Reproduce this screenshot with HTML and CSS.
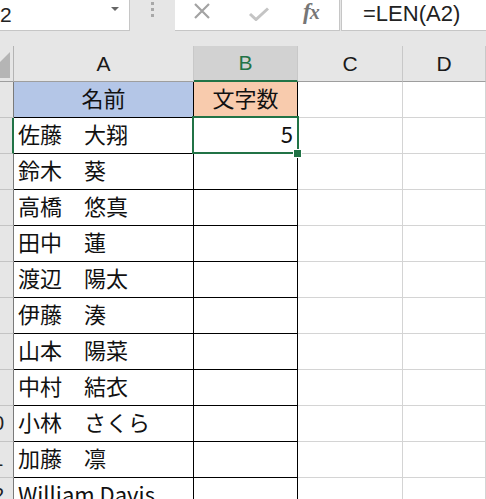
FILE: index.html
```html
<!DOCTYPE html>
<html lang="ja">
<head>
<meta charset="utf-8">
<link rel="stylesheet" href="styles.css">
</head>
<body>
<div class="topbar">
  <div class="namebox"><span class="nb-text">B2</span><span class="nb-arrow"></span></div>
  <div class="grip"><i></i><i></i><i></i></div>
  <div class="tools">
    <svg class="ic-x" width="18" height="16" viewBox="0 0 18 16"><path d="M2 1 L16 15 M16 1 L2 15" stroke="#a3a3a3" stroke-width="2.2" fill="none"/></svg>
    <svg class="ic-check" width="22" height="14" viewBox="0 0 22 14"><path d="M2 7 L8 12.5 L20 1.5" stroke="#c4c4c4" stroke-width="3" fill="none"/></svg>
    <span class="fx">f<span class="fx-x">x</span></span>
  </div>
  <div class="sep"></div>
  <div class="formula">=LEN(A2)</div>
</div>
<div class="band"></div>
<div class="sheet">
  <div class="corner"><svg width="13" height="35" viewBox="0 0 13 35"><polygon points="0,16 10,6 10,32 0,32" fill="#b5b5b5"/></svg></div>
  <div class="ch">A</div>
  <div class="ch ch-sel">B</div>
  <div class="ch">C</div>
  <div class="ch">D</div>

  <div class="rh"><span>1</span></div>
  <div class="c d a1">名前</div>
  <div class="c d b1">文字数</div>
  <div class="c"></div><div class="c"></div>

  <div class="rh rh-sel"><span>2</span></div>
  <div class="c d">佐藤　大翔</div>
  <div class="c d num sel">5<span class="handle"></span></div>
  <div class="c"></div><div class="c"></div>

  <div class="rh"><span>3</span></div>
  <div class="c d">鈴木　葵</div>
  <div class="c d"></div>
  <div class="c"></div><div class="c"></div>

  <div class="rh"><span>4</span></div>
  <div class="c d">高橋　悠真</div>
  <div class="c d"></div>
  <div class="c"></div><div class="c"></div>

  <div class="rh"><span>5</span></div>
  <div class="c d">田中　蓮</div>
  <div class="c d"></div>
  <div class="c"></div><div class="c"></div>

  <div class="rh"><span>6</span></div>
  <div class="c d">渡辺　陽太</div>
  <div class="c d"></div>
  <div class="c"></div><div class="c"></div>

  <div class="rh"><span>7</span></div>
  <div class="c d">伊藤　湊</div>
  <div class="c d"></div>
  <div class="c"></div><div class="c"></div>

  <div class="rh"><span>8</span></div>
  <div class="c d">山本　陽菜</div>
  <div class="c d"></div>
  <div class="c"></div><div class="c"></div>

  <div class="rh"><span>9</span></div>
  <div class="c d">中村　結衣</div>
  <div class="c d"></div>
  <div class="c"></div><div class="c"></div>

  <div class="rh"><span>10</span></div>
  <div class="c d">小林　さくら</div>
  <div class="c d"></div>
  <div class="c"></div><div class="c"></div>

  <div class="rh"><span>11</span></div>
  <div class="c d">加藤　凛</div>
  <div class="c d"></div>
  <div class="c"></div><div class="c"></div>

  <div class="rh"><span>12</span></div>
  <div class="c d">William Davis</div>
  <div class="c d"></div>
  <div class="c"></div><div class="c"></div>
</div>
</body>
</html>
```
FILE: styles.css
```css
* { box-sizing: border-box; }
html, body { margin: 0; padding: 0; }
body {
  background: #e6e6e6;
  width: 486px;
  height: 499px;
  overflow: hidden;
  font-family: "Noto Sans CJK JP", "Liberation Sans", sans-serif;
  color: #111;
}
.topbar {
  display: flex;
  height: 31px;
}
.namebox {
  width: 130px;
  background: #fff;
  border-right: 1px solid #c6c6c6;
  border-bottom: 1px solid #c6c6c6;
  display: flex;
  align-items: center;
  overflow: hidden;
}
.nb-text {
  font-family: "Liberation Sans", sans-serif;
  font-size: 21px;
  margin-left: -14px;
  color: #222;
}
.nb-arrow {
  margin-left: auto;
  margin-right: 10px;
  margin-top: -12px;
  width: 0; height: 0;
  border-left: 4px solid transparent;
  border-right: 4px solid transparent;
  border-top: 4px solid #666;
}
.grip {
  width: 45px;
  display: flex;
  flex-direction: column;
  align-items: center;
  padding-top: 2px;
  gap: 3px;
}
.grip i {
  display: block;
  width: 3px;
  height: 3px;
  background: #a8a8a8;
}
.tools {
  width: 165px;
  background: #fff;
  border-right: 1px solid #c6c6c6;
  border-bottom: 1px solid #c6c6c6;
  display: flex;
  align-items: flex-start;
}
.ic-x { margin-left: 18px; margin-top: 3px; }
.ic-check { margin-left: 37px; margin-top: 7px; }
.fx {
  margin-left: 33px;
  margin-top: 0;
  line-height: 24px;
  font-family: "Liberation Serif", serif;
  font-style: italic;
  font-weight: bold;
  font-size: 23px;
  color: #767676;
  letter-spacing: -1px;
}
.fx-x { font-size: 20px; }
.sep { width: 1px; }
.formula {
  flex: 1;
  background: #fff;
  border-left: 1px solid #c6c6c6;
  border-bottom: 1px solid #c6c6c6;
  padding-left: 21px;
  font-family: "Liberation Sans", sans-serif;
  font-size: 22px;
  line-height: 28px;
  color: #222;
  white-space: nowrap;
}
.band { height: 15px; }
.sheet {
  display: grid;
  grid-template-columns: 14px 180px 104px 105px 83px;
  grid-template-rows: repeat(13, 36px);
}
.corner {
  background: #e6e6e6;
  border-right: 1px solid #b4b4b4;
  border-bottom: 1px solid #9e9e9e;
}
.corner svg { display: block; }
.ch {
  background: #e6e6e6;
  border-right: 1px solid #c8c8c8;
  border-bottom: 1px solid #9e9e9e;
  display: flex;
  align-items: center;
  justify-content: center;
  font-family: "Liberation Sans", sans-serif;
  font-size: 21px;
  color: #1a1a1a;
}
.ch-sel {
  background: #d2d2d2;
  color: #217346;
  border-bottom: 2px solid #217346;
}
.rh {
  background: #e6e6e6;
  border-right: 1px solid #7a7a7a;
  border-bottom: 1px solid #c4c4c4;
  overflow: hidden;
  display: flex;
  align-items: center;
}
.rh span {
  flex: none;
  width: 40px;
  margin-left: -27px;
  text-align: center;
  font-family: "Liberation Sans", sans-serif;
  font-size: 20px;
  color: #222;
}
.rh-sel { border-right: 2px solid #217346; }
.c {
  background: #fff;
  border-right: 1px solid #d4d4d4;
  border-bottom: 1px solid #d4d4d4;
}
.d {
  border-right-color: #000;
  border-bottom-color: #000;
  font-size: 22px;
  line-height: 31px;
  padding-left: 4px;
  white-space: nowrap;
}
.a1 { background: #b4c6e7; text-align: center; padding-left: 0; }
.b1 { background: #f8cbad; text-align: center; padding-left: 0; }
.num {
  text-align: right;
  padding-right: 4px;
  padding-left: 0;
}
.sel { position: relative; }
.sel::after {
  content: "";
  position: absolute;
  left: -2px;
  top: -2px;
  right: -2px;
  bottom: -1px;
  border: 2px solid #217346;
  z-index: 2;
}
.handle {
  position: absolute;
  right: -4px;
  bottom: -4px;
  width: 7px;
  height: 7px;
  background: #217346;
  outline: 1px solid #fff;
  z-index: 3;
}
```
